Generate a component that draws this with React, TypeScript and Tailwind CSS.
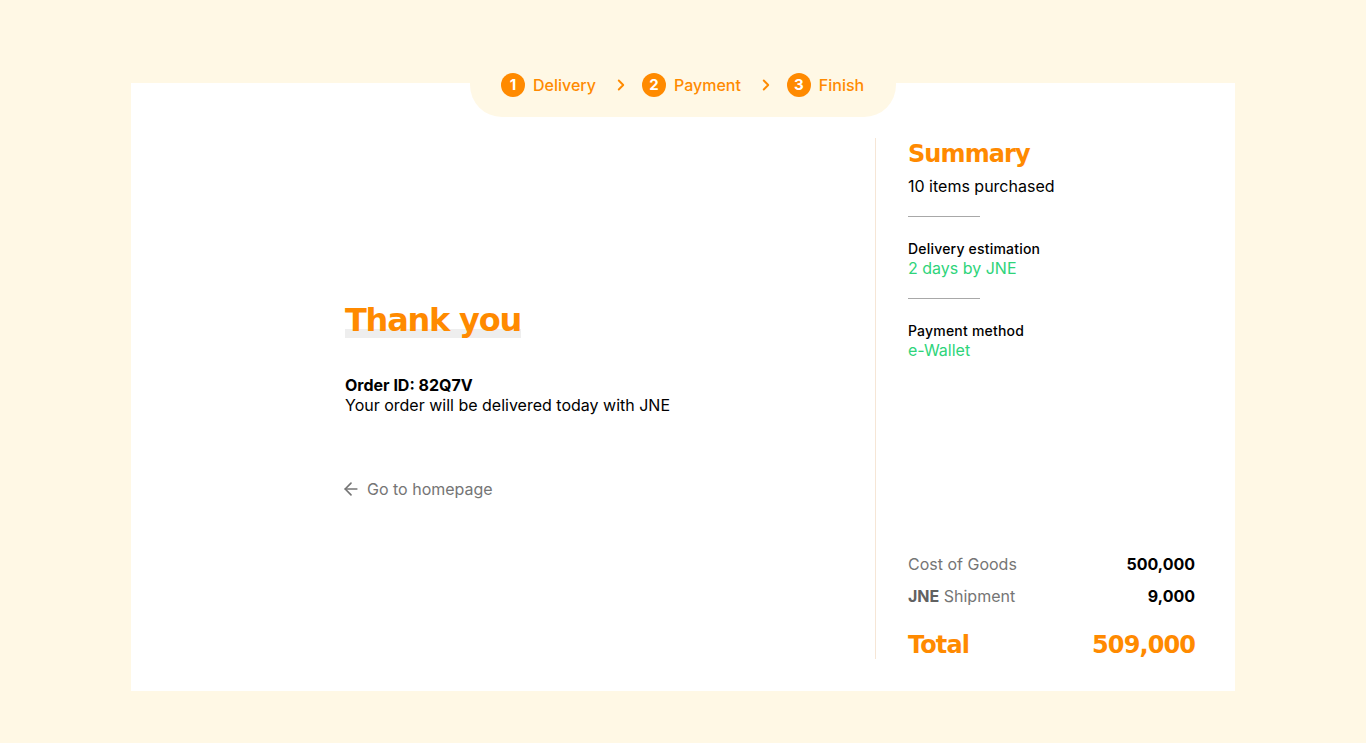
import { ArrowLeft, ChevronRight } from "lucide-react";

const heading = "font-['DejaVu_Sans',sans-serif] font-bold text-[#ff8a00] tracking-[-0.038em]";

function Step({ n, label }: { n: number; label: string }) {
  return (
    <div className="flex items-center gap-[8px]">
      <span className="flex h-[24px] w-[24px] items-center justify-center rounded-full bg-[#ff8a00] text-[15px] font-bold text-white">
        {n}
      </span>
      <span className="text-[16px] font-medium text-[#ff8a00]">{label}</span>
    </div>
  );
}

function Stepper() {
  return (
    <div className="absolute left-1/2 top-[-30px] flex h-[64px] w-[426px] -translate-x-1/2 items-center rounded-b-[32px] bg-[#fff8e5] pl-[31px]">
      <Step n={1} label="Delivery" />
      <ChevronRight size={18} strokeWidth={2.5} className="ml-[16px] mr-[12px] text-[#ff8a00]" />
      <Step n={2} label="Payment" />
      <ChevronRight size={18} strokeWidth={2.5} className="ml-[16px] mr-[12px] text-[#ff8a00]" />
      <Step n={3} label="Finish" />
    </div>
  );
}

function Summary() {
  return (
    <aside className="flex w-[320px] flex-col justify-between border-l border-[#f6e6d6] pl-[32px]">
      <div>
        <h2 className={`${heading} text-[24px] leading-[32px]`}>Summary</h2>
        <p className="mt-[4px] text-[16px] leading-[24px] text-black">10 items purchased</p>
        <div className="mt-[18px] h-px w-[72px] bg-[#a8a8a8]" />
        <p className="mt-[22px] text-[14px] font-medium leading-[20px] tracking-[0.2px] text-black">Delivery estimation</p>
        <p className="-mt-[1px] text-[16px] leading-[20px] text-[#2ed47a]">2 days by JNE</p>
        <div className="mt-[20px] h-px w-[72px] bg-[#a8a8a8]" />
        <p className="mt-[22px] text-[14px] font-medium leading-[20px] tracking-[0.2px] text-black">Payment method</p>
        <p className="-mt-[1px] text-[16px] leading-[20px] text-[#2ed47a]">e-Wallet</p>
      </div>
      <div>
        <div className="flex justify-between text-[16px] leading-[24px]">
          <span className="text-[#757575]">Cost of Goods</span>
          <span className="font-bold text-black">500,000</span>
        </div>
        <div className="mt-[8px] flex justify-between text-[16px] leading-[24px]">
          <span className="text-[#757575]">
            <b className="font-bold text-[#616161]">JNE</b> Shipment
          </span>
          <span className="font-bold text-black">9,000</span>
        </div>
        <div className={`${heading} mt-[23px] flex justify-between text-[24px] leading-[28px]`}>
          <span>Total</span>
          <span>509,000</span>
        </div>
      </div>
    </aside>
  );
}

export default function App() {
  return (
    <div className="min-h-[743px] bg-[#fff8e5] pt-[83px] font-['Inter',sans-serif]">
      <main className="relative mx-auto flex h-[608px] w-[1104px] bg-white pb-[32px] pr-[40px] pt-[55px]">
        <Stepper />
        <section className="flex-1 pl-[214px] pt-[162px]">
          <h1 className={`${heading} inline-block bg-[linear-gradient(to_bottom,transparent_29px,#eeeeee_29px,#eeeeee_38px,transparent_38px)] text-[32px] leading-[40px]`}>
            Thank you
          </h1>
          <p className="mt-[35px] text-[16px] font-bold leading-[20px] text-black">Order ID: 82Q7V</p>
          <p className="text-[16px] leading-[20px] text-black">Your order will be delivered today with JNE</p>
          <a href="#" className="mt-[62px] flex items-center gap-[6px] text-[16px] leading-[24px] text-[#757575]">
            <ArrowLeft size={20} strokeWidth={2} className="-ml-[4px]" />
            Go to homepage
          </a>
        </section>
        <Summary />
      </main>
    </div>
  );
}
